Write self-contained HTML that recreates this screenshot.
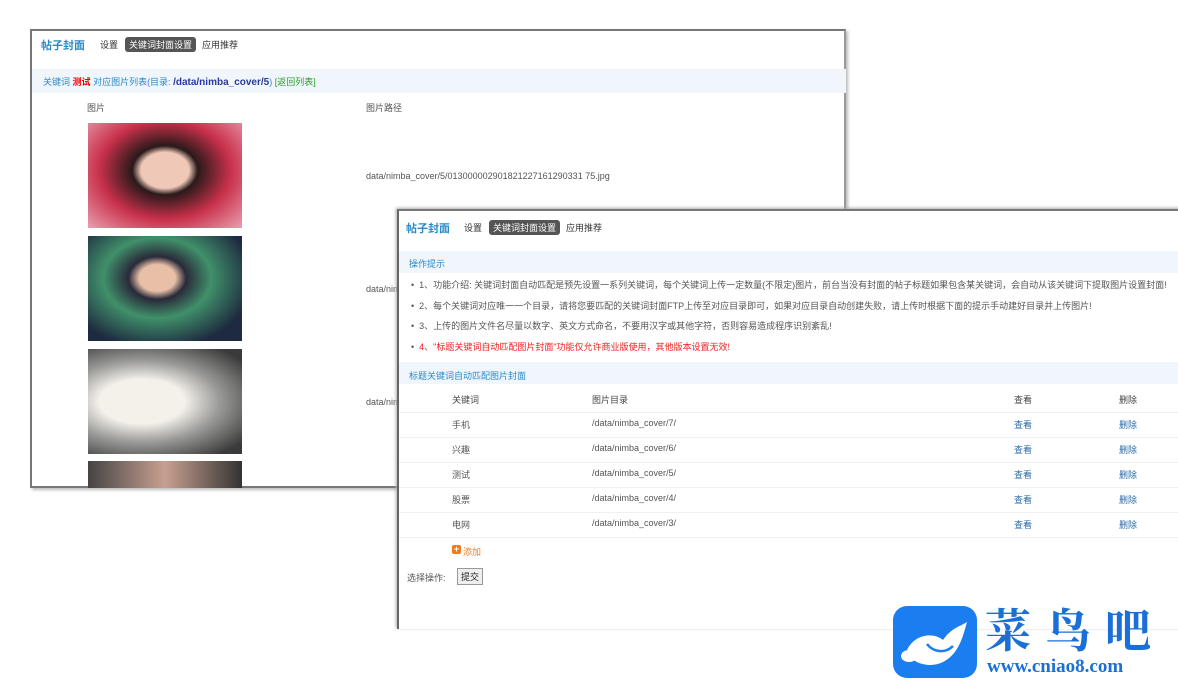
<!DOCTYPE html>
<html><head><meta charset="utf-8"><style>
*{margin:0;padding:0;box-sizing:border-box}
body{width:1178px;height:689px;background:#fff;position:relative;overflow:hidden;font-family:"Liberation Sans","Noto Sans CJK SC",sans-serif;font-size:9px;color:#555}
.abs{position:absolute;white-space:nowrap}
.win{position:absolute;background:#fff}
#w1{left:30px;top:29px;width:816px;height:459px;border:2px solid #777;border-right-color:#999;box-shadow:2px 2px 3px #bbb}
#w2{left:397px;top:209px;width:790px;height:420px;border-left:2px solid #666;border-top:2px solid #777;box-shadow:-1px -1px 3px #aaa}
.title{color:#2a8ac8;font-size:11px;font-weight:bold}
.tab{font-size:9px;color:#333}
.tabon{background:#555;color:#fff;border-radius:3px;padding:1px 4px}
.bar{position:absolute;background:#f0f6fb}
.blue{color:#2a8ac8}
.lk{color:#2a6aa8}
.pic{position:absolute;left:56px;width:154px}
.line{position:absolute;height:1px;background:#eef0f2}
</style></head><body>

<div class="win" id="w1">
 <div class="abs title" style="left:9px;top:6px">帖子封面</div>
 <div class="abs tab" style="left:68px;top:7px">设置</div>
 <div class="abs tab tabon" style="left:93px;top:6px">关键词封面设置</div>
 <div class="abs tab" style="left:170px;top:7px">应用推荐</div>
 <div class="bar" style="left:0;top:38px;width:814px;height:24px"></div>
 <div class="abs" style="left:11px;top:44px;font-size:9px"><span class="blue">关键词</span> <span style="color:#e00;font-weight:bold">测试</span> <span class="blue">对应图片列表(目录: </span><b style="color:#2a3a9a;font-size:10px">/data/nimba_cover/5</b><span class="blue">)</span> <span style="color:#2a9a2a">[返回列表]</span></div>
 <div class="abs" style="left:55px;top:70px">图片</div>
 <div class="abs" style="left:334px;top:70px">图片路径</div>
 <div class="pic" style="top:92px;height:105px;background:radial-gradient(ellipse at 50% 45%,#f0c8b8 0 22%,#2a1a1a 30%,#c8304a 60%,#e9a0b0 100%)"></div>
 <div class="abs" style="left:334px;top:140px">data/nimba_cover/5/013000002901821227161290331 75.jpg</div>
 <div class="pic" style="top:205px;height:105px;background:radial-gradient(ellipse at 45% 40%,#e8c0a8 0 15%,#2a2a3a 24%,#40906a 45%,#1e2a40 80%)"></div>
 <div class="abs" style="left:334px;top:253px">data/nim</div>
 <div class="pic" style="top:318px;height:105px;background:radial-gradient(ellipse at 35% 50%,#f4f0ea 0 30%,#9a9a98 55%,#3a3a3a 90%)"></div>
 <div class="abs" style="left:334px;top:366px">data/nim</div>
 <div class="pic" style="top:430px;height:27px;background:linear-gradient(90deg,#444,#c8a090 50%,#333)"></div>
</div>

<div class="win" id="w2">
 <div class="abs title" style="left:7px;top:9px">帖子封面</div>
 <div class="abs tab" style="left:65px;top:10px">设置</div>
 <div class="abs tab tabon" style="left:90px;top:9px">关键词封面设置</div>
 <div class="abs tab" style="left:167px;top:10px">应用推荐</div>
 <div class="bar" style="left:0;top:40px;width:790px;height:22px"></div>
 <div class="abs blue" style="left:10px;top:46px">操作提示</div>
 <div class="abs" style="left:12px;top:67px">•&nbsp; 1、功能介绍: 关键词封面自动匹配是预先设置一系列关键词，每个关键词上传一定数量(不限定)图片，前台当没有封面的帖子标题如果包含某关键词，会自动从该关键词下提取图片设置封面!</div>
 <div class="abs" style="left:12px;top:88px">•&nbsp; 2、每个关键词对应唯一一个目录，请将您要匹配的关键词封面FTP上传至对应目录即可，如果对应目录自动创建失败，请上传时根据下面的提示手动建好目录并上传图片!</div>
 <div class="abs" style="left:12px;top:108px">•&nbsp; 3、上传的图片文件名尽量以数字、英文方式命名，不要用汉字或其他字符，否则容易造成程序识别紊乱!</div>
 <div class="abs" style="left:12px;top:129px">•&nbsp; <span style="color:#e22">4、"标题关键词自动匹配图片封面"功能仅允许商业版使用，其他版本设置无效!</span></div>
 <div class="bar" style="left:0;top:151px;width:790px;height:22px"></div>
 <div class="abs blue" style="left:10px;top:158px">标题关键词自动匹配图片封面</div>
 <div class="abs" style="left:53px;top:182px;color:#444">关键词</div>
 <div class="abs" style="left:193px;top:182px;color:#444">图片目录</div>
 <div class="abs" style="left:615px;top:182px;color:#444">查看</div>
 <div class="abs" style="left:720px;top:182px;color:#444">删除</div>
 <div class="line" style="left:0;top:201px;width:790px"></div>
 <div class="abs" style="left:53px;top:207px">手机</div><div class="abs" style="left:193px;top:207px">/data/nimba_cover/7/</div><div class="abs lk" style="left:615px;top:207px">查看</div><div class="abs lk" style="left:720px;top:207px">删除</div>
 <div class="line" style="left:0;top:226px;width:790px"></div>
 <div class="abs" style="left:53px;top:232px">兴趣</div><div class="abs" style="left:193px;top:232px">/data/nimba_cover/6/</div><div class="abs lk" style="left:615px;top:232px">查看</div><div class="abs lk" style="left:720px;top:232px">删除</div>
 <div class="line" style="left:0;top:251px;width:790px"></div>
 <div class="abs" style="left:53px;top:257px">测试</div><div class="abs" style="left:193px;top:257px">/data/nimba_cover/5/</div><div class="abs lk" style="left:615px;top:257px">查看</div><div class="abs lk" style="left:720px;top:257px">删除</div>
 <div class="line" style="left:0;top:276px;width:790px"></div>
 <div class="abs" style="left:53px;top:282px">股票</div><div class="abs" style="left:193px;top:282px">/data/nimba_cover/4/</div><div class="abs lk" style="left:615px;top:282px">查看</div><div class="abs lk" style="left:720px;top:282px">删除</div>
 <div class="line" style="left:0;top:301px;width:790px"></div>
 <div class="abs" style="left:53px;top:307px">电网</div><div class="abs" style="left:193px;top:307px">/data/nimba_cover/3/</div><div class="abs lk" style="left:615px;top:307px">查看</div><div class="abs lk" style="left:720px;top:307px">删除</div>
 <div class="line" style="left:0;top:326px;width:790px"></div>
 <div class="abs" style="left:53px;top:334px;width:9px;height:9px;background:#f07a20;border-radius:2px;color:#fff;font-size:9px;line-height:9px;text-align:center;font-weight:bold">+</div>
 <div class="abs" style="left:64px;top:334px;color:#f07a20">添加</div>
 <div class="abs" style="left:8px;top:360px">选择操作:</div>
 <div class="abs" style="left:58px;top:357px;border:1px solid #999;background:#eee;padding:1px 3px;color:#222">提交</div>
</div>

<svg class="abs" style="left:893px;top:606px" width="84" height="72" viewBox="0 0 84 72">
 <rect x="0" y="0" width="84" height="72" rx="14" fill="#1a7ef0"/>
 <path d="M14 44 C22 28 40 26 50 34 C58 22 68 20 74 16 C70 30 66 48 50 56 C38 62 24 58 18 52 Z" fill="#fff"/>
 <ellipse cx="16" cy="50" rx="8" ry="6" fill="#fff"/>
 <path d="M34 38 C40 46 52 48 60 40" stroke="#1a7ef0" stroke-width="2.5" fill="none"/>
</svg>
<div class="abs" style="left:985px;top:602px;font-size:46px;color:#1a6fd8;font-family:'Noto Serif CJK SC','WenQuanYi Zen Hei',serif;font-weight:bold;letter-spacing:14px;line-height:52px">菜鸟吧</div>
<div class="abs" style="left:987px;top:656px;font-size:19px;color:#1a6fd8;font-family:'Liberation Serif',serif;font-weight:bold">www.cniao8.com</div>
</body></html>
